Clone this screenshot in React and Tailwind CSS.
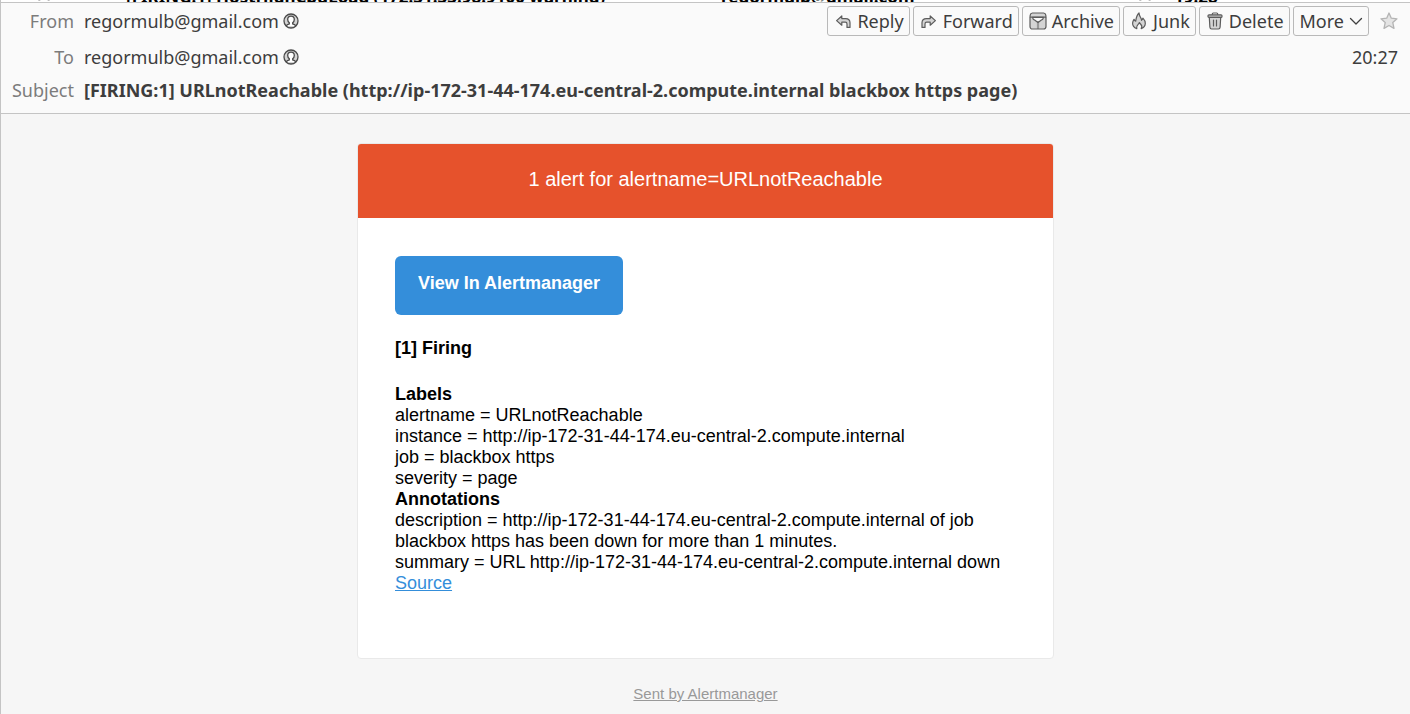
const iconProps = {
  width: 18,
  height: 18,
  viewBox: "0 0 18 18",
  fill: "#d4d4d4",
  stroke: "#5c5c5c",
  strokeWidth: 1.2,
  strokeLinejoin: "round",
  strokeLinecap: "round",
  "aria-hidden": true,
  className: "shrink-0",
};

function ReplyIcon() {
  return (
    <svg {...iconProps}>
      <path d="M2.600 8.600 7.800 4v2.600h3.800c2.800 0 4.400 1.600 4.400 4.200v4.600h-3v-3.400c0-1.300-.5-1.800-1.700-1.800H7.800v3z" />
    </svg>
  );
}

function ForwardIcon() {
  return (
    <svg {...iconProps}>
      <path d="M15.400 8.600 10.200 4v2.600H6.400c-2.800 0-4.400 1.600-4.400 4.200v4.600h3v-3.400c0-1.300.5-1.800 1.700-1.800h3.500v3z" />
    </svg>
  );
}

function ArchiveIcon() {
  return (
    <svg {...iconProps}>
      <path d="M3.400 1h11.200c1.200 0 2 .9 2.200 2.200l.2 2v9.300c0 1.500-1 2.500-2.500 2.500h-11C2 17 1 16 1 14.500V5.200l.2-2C1.400 1.900 2.200 1 3.400 1z" />
      <path d="M1.400 5.200h15.200" />
      <path d="M3.600 5.300h10.800c-.2 1.800-.9 2.700-2.300 2.900L9 10.500 5.900 8.200c-1.400-.2-2.100-1.100-2.300-2.900z" fill="#fafafa" />
      <path d="M9 9.500v7" strokeDasharray="1 1" strokeWidth="2.200" strokeLinecap="butt" />
    </svg>
  );
}

function JunkIcon() {
  return (
    <svg {...iconProps}>
      <path d="M6.800 16.600C4 15.700 2.500 13.600 2.600 11.100c.1-1.500.6-2.700 1.400-3.800.4 1 .9 1.600 1.700 1.900C6.200 6.300 6.400 3.300 9 1c.2 2.500 1 3.700 1.900 5.100.4.700.7 1.400.6 2.200.8-.5 1.200-1.200 1.400-2.200 1.700 1.700 2.500 3.400 2.400 5.400-.1 2.500-1.600 4.300-4.100 5.100.9-1.500.8-2.900-.3-4.100-.6-.7-1.200-1.200-1.500-2-.3.900-.8 1.500-1.500 2.100-1.200 1.200-1.600 2.500-1.100 4z" />
    </svg>
  );
}

function TrashIcon() {
  return (
    <svg {...iconProps}>
      <path d="M3.300 5.500h11.400l-.6 9.800c-.1 1.100-.7 1.700-1.700 1.700H5.600c-1 0-1.600-.6-1.700-1.700z" />
      <path d="M6.300 3V2c0-.6.4-1 1-1h3.400c.6 0 1 .4 1 1v1" fill="none" />
      <rect x="2" y="2.800" width="14" height="2.600" rx="1" fill="#bdbdbd" />
      <path d="M7.500 8v6M10.500 8v6" />
    </svg>
  );
}

function ContactIcon() {
  return (
    <svg width="16" height="16" viewBox="0 0 16 16" fill="none" stroke="#4a4a4a" strokeWidth="1.300" aria-hidden="true" className="shrink-0">
      <circle cx="8" cy="8" r="7" fill="#d4d4d4" />
      <path
        d="M3.300 13c.3-1.300 1.500-1.700 3-2.100v-1.200C5.200 8.900 4.700 7.800 4.700 6.500 4.700 4.500 6 3.200 8 3.200s3.300 1.300 3.300 3.300c0 1.300-.5 2.400-1.600 3.200v1.200c1.500.4 2.700.8 3 2.100"
        fill="#ffffff"
      />
    </svg>
  );
}

function StarIcon() {
  return (
    <svg width="18" height="18" viewBox="0 0 18 18" fill="#e4e4e4" stroke="#b4b4b4" strokeWidth="1.300" strokeLinejoin="round" aria-hidden="true" className="shrink-0">
      <path d="m9 1 2.300 5.200 5.700.6-4.200 3.800 1.200 5.800L9 13.500l-5 2.900 1.200-5.800L1 6.800l5.700-.6z" />
    </svg>
  );
}

function ChevronIcon() {
  return (
    <svg width="14" height="14" viewBox="0 0 14 14" fill="none" stroke="#404040" strokeWidth="1.300" strokeLinecap="round" strokeLinejoin="round" aria-hidden="true" className="shrink-0">
      <path d="m1.500 4.500 5.500 5.500 5.500-5.500" />
    </svg>
  );
}

function ToolbarButton({ icon, children }) {
  return (
    <button
      type="button"
      className="flex h-[30px] items-center gap-[5px] rounded-[3px] border border-[#b9b9b9] bg-[#fafafa] pr-[5px] pl-[6px] text-[18px] leading-6 whitespace-nowrap"
    >
      {icon}
      {children}
    </button>
  );
}

function Contact({ address }) {
  return (
    <dd className="flex items-center gap-1">
      <a href={`mailto:${address}`}>{address}</a>
      <ContactIcon />
    </dd>
  );
}

const labels = [
  ["alertname", "URLnotReachable"],
  ["instance", "http://ip-172-31-44-174.eu-central-2.compute.internal"],
  ["job", "blackbox https"],
  ["severity", "page"],
];

const annotations = [
  ["description", "http://ip-172-31-44-174.eu-central-2.compute.internal of job blackbox https has been down for more than 1 minutes."],
  ["summary", "URL http://ip-172-31-44-174.eu-central-2.compute.internal down"],
];

function Pairs({ title, rows }) {
  return (
    <section>
      <h3 className="font-bold">{title}</h3>
      {rows.map(([name, value]) => (
        <p key={name}>{`${name} = ${value}`}</p>
      ))}
    </section>
  );
}

export default function App() {
  return (
    <div className="flex min-h-screen flex-col border-l border-[#c4c4c4] bg-[#f6f6f6] font-['Noto_Sans','Open_Sans',sans-serif] text-[#3d3d3d]">
      <div className="flex h-[2px] items-end overflow-hidden bg-white pl-[34px] text-[17px] leading-[10px] font-bold whitespace-nowrap text-black">
        <span className="w-[91px] shrink-0">
          <StarIcon />
        </span>
        <span className="w-[595px] shrink-0">[FIRING:1] HostHighCpuLoad (172.31.33.98:9100 warning)</span>
        <span className="w-[415px] shrink-0">regormulb@gmail.com</span>
        <span className="w-[38px] shrink-0">
          <StarIcon />
        </span>
        <span>19:28</span>
      </div>

      <header className="border-y border-[#c4c4c4] bg-[#fafafa] pt-[3px] pr-3 pb-[11px] text-[18px] leading-6">
        <div className="flex items-start justify-between">
          <dl className="grid grid-cols-[73px_auto] gap-x-[10px] pt-[3px]">
            <dt className="text-right text-[#7c7c7c]">From</dt>
            <Contact address="regormulb@gmail.com" />
          </dl>
          <div className="flex items-center gap-[3px]">
            <ToolbarButton icon={<ReplyIcon />}>Reply</ToolbarButton>
            <ToolbarButton icon={<ForwardIcon />}>Forward</ToolbarButton>
            <ToolbarButton icon={<ArchiveIcon />}>Archive</ToolbarButton>
            <ToolbarButton icon={<JunkIcon />}>Junk</ToolbarButton>
            <ToolbarButton icon={<TrashIcon />}>Delete</ToolbarButton>
            <ToolbarButton>
              More
              <ChevronIcon />
            </ToolbarButton>
            <button type="button" aria-label="Star" className="ml-2">
              <StarIcon />
            </button>
          </div>
        </div>
        <div className="mt-[9px] flex justify-between">
          <dl className="grid grid-cols-[73px_auto] gap-x-[10px]">
            <dt className="text-right text-[#7c7c7c]">To</dt>
            <Contact address="regormulb@gmail.com" />
          </dl>
          <time>20:27</time>
        </div>
        <dl className="mt-[9px] grid grid-cols-[73px_1fr] gap-x-[10px]">
          <dt className="text-right text-[#7c7c7c]">Subject</dt>
          <dd className="font-bold">
            [FIRING:1] URLnotReachable (http://ip-172-31-44-174.eu-central-2.compute.internal blackbox https page)
          </dd>
        </dl>
      </header>

      <main className="flex flex-col items-center px-6 pt-[29px] font-['Liberation_Sans',Arial,sans-serif] text-[18px] leading-[21px] text-black">
        <article className="w-full max-w-[697px] overflow-hidden rounded-[4px] border border-[#e9e9e9] bg-white">
          <h1 className="bg-[#e6522c] px-6 pt-[23px] pb-[27px] text-center text-[20px] leading-6 text-white">
            1 alert for alertname=URLnotReachable
          </h1>
          <div className="px-[37px] pt-[38px] pb-[64px]">
            <a href="#alertmanager" className="inline-block rounded-[6px] bg-[#348eda] px-[23px] pt-[17px] pb-[21px] align-top font-bold text-white">
              View In Alertmanager
            </a>
            <h2 className="mt-[23px] mb-[25px] font-bold">[1] Firing</h2>
            <Pairs title="Labels" rows={labels} />
            <Pairs title="Annotations" rows={annotations} />
            <a href="#source" className="text-[#348eda] underline">
              Source
            </a>
          </div>
        </article>
        <footer className="pt-6 text-[15px] text-[#999999]">
          <a href="#sent-by" className="underline">
            Sent by Alertmanager
          </a>
        </footer>
      </main>
    </div>
  );
}
